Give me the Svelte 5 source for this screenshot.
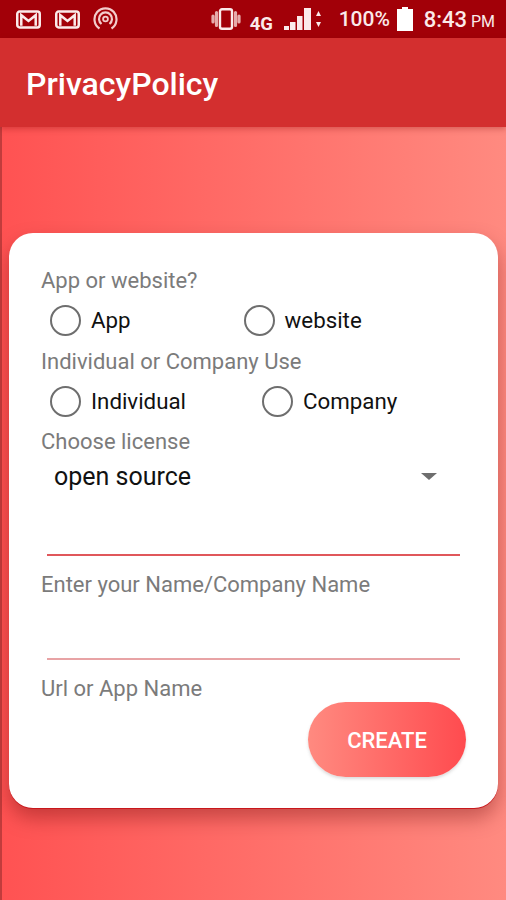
<script>
  let kind = $state('');
  let use = $state('');
</script>

<div class="page">
  <div class="status">
    <div class="notifs">
      <svg class="mail" viewBox="0 0 26 19" fill="none" stroke="#fbeaea" stroke-width="2.6"><rect x="1.3" y="1.3" width="23.4" height="16.4" rx="2.5"/><path d="M5.5 16V5l7.5 6 7.5-6v11"/></svg>
      <svg class="mail" viewBox="0 0 26 19" fill="none" stroke="#fbeaea" stroke-width="2.6"><rect x="1.3" y="1.3" width="23.4" height="16.4" rx="2.5"/><path d="M5.5 16V5l7.5 6 7.5-6v11"/></svg>
      <svg class="cast" viewBox="0 0 25 24" fill="none" stroke="#f3cccc" stroke-width="2.2"><path d="M6.5 21.5a11 11 0 1 1 12 0"/><path d="M8.5 17a6.5 6.5 0 1 1 8 0"/><circle cx="12.5" cy="12" r="2.4" stroke-width="1.8"/></svg>
    </div>
    <div class="sys">
      <svg class="vibrate" viewBox="0 0 30 22"><path d="M5.5 4.5v13M2 8v6M24.5 4.5v13M28 8v6" stroke="#e6abab" stroke-width="3.2" stroke-linecap="round"/><rect x="9" y="1.2" width="12" height="19.6" rx="2" fill="none" stroke="#fbeaea" stroke-width="2.4"/></svg>
      <span class="net">4G</span>
      <svg class="signal" viewBox="0 0 37 22" fill="#fbeaea"><rect x="0" y="18" width="5" height="4"/><rect x="6" y="14" width="5.500" height="8"/><rect x="13" y="8" width="5.500" height="14"/><rect x="20" y="0" width="7" height="22"/><path d="M34.500 3l2.500 5h-5zM34.500 19l-2.500-5h5z"/></svg>
      <span class="pct">100%</span>
      <svg class="battery" viewBox="0 0 16 24" fill="#fff"><path d="M5 0h6v2h5v22H0V2h5z"/></svg>
      <span class="time">8:43<small>PM</small></span>
    </div>
  </div>

  <header class="toolbar">PrivacyPolicy</header>

  <main class="content">
    <form class="card">
      <p class="label">App or website?</p>
      <div class="radios first">
        <label class="radio">
          <input type="radio" bind:group={kind} value="app" />
          App
        </label>
        <label class="radio">
          <input type="radio" bind:group={kind} value="website" />
          website
        </label>
      </div>

      <p class="label">Individual or Company Use</p>
      <div class="radios second">
        <label class="radio">
          <input type="radio" bind:group={use} value="individual" />
          Individual
        </label>
        <label class="radio">
          <input type="radio" bind:group={use} value="company" />
          Company
        </label>
      </div>

      <p class="label">Choose license</p>
      <div class="select">
        <span>open source</span>
        <i class="caret"></i>
      </div>

      <div class="line strong"></div>
      <p class="label">Enter your Name/Company Name</p>
      <div class="line soft"></div>
      <p class="label">Url or App Name</p>

      <button type="button" class="create">CREATE</button>
    </form>
  </main>
</div>

<style>
  :global(body) {
    margin: 0;
  }

  .page {
    width: 506px;
    height: 900px;
    overflow: hidden;
    display: flex;
    flex-direction: column;
    font-family: Roboto, sans-serif;
  }

  .status {
    height: 38px;
    flex: none;
    display: flex;
    justify-content: space-between;
    align-items: center;
    background: #a20008;
    color: #fbeaea;
    padding: 0 11px 0 16px;
  }

  .notifs {
    display: flex;
    align-items: center;
    gap: 14px;
  }

  .mail {
    width: 25px;
    height: 19px;
  }

  .cast {
    width: 25px;
    height: 24px;
    margin-left: -1px;
  }

  .sys {
    display: flex;
    align-items: center;
    font-weight: 500;
  }

  .vibrate {
    width: 30px;
    height: 22px;
    margin-right: 9px;
  }

  .net {
    width: 25px;
    font-size: 18.5px;
    font-weight: 700;
    margin-right: 9px;
    padding-top: 9px;
    line-height: 20px;
  }

  .signal {
    width: 37px;
    height: 22px;
    margin-right: 18px;
  }

  .pct {
    width: 51px;
    font-size: 21px;
    margin-right: 7px;
  }

  .battery {
    width: 16px;
    height: 24px;
    margin-right: 11px;
  }

  .time {
    font-size: 22px;
    white-space: nowrap;
  }

  .time small {
    font-size: 16px;
    font-weight: 400;
    margin-left: 4px;
  }

  .toolbar {
    height: 89px;
    flex: none;
    position: relative;
    box-sizing: border-box;
    padding: 26px 0 0 26px;
    font-size: 32px;
    font-weight: 500;
    line-height: 40px;
    color: #fff;
    background: #d32f2f;
    box-shadow: 0 2px 6px rgba(120, 0, 0, 0.3);
  }

  .content {
    flex: 1;
    padding: 106px 8px 0 9px;
    background: linear-gradient(90deg, #ff5252 0%, #ff8a80 100%);
    box-shadow: inset 2px 0 0 #c23c3c;
  }

  .card {
    height: 575px;
    box-sizing: border-box;
    padding: 34px 38px 0 32px;
    background: #fff;
    border-radius: 24px;
    box-shadow: 0 1px 0 #c9171c, 0 10px 20px rgba(90, 0, 0, 0.35);
  }

  .label {
    margin: 0;
    font-size: 22px;
    line-height: 28px;
    color: #7b7b7b;
  }

  .radios {
    display: flex;
    height: 50px;
    padding-left: 9px;
    margin-bottom: 3px;
  }

  .first {
    gap: 113px;
  }

  .second {
    gap: 76px;
    margin-bottom: 2px;
  }

  .radio {
    display: flex;
    align-items: center;
    font-size: 22.3px;
    color: #111;
  }

  .radio input {
    appearance: none;
    width: 31px;
    height: 31px;
    margin: 0 10px 0 0;
    border: 2.5px solid #6e6e6e;
    border-radius: 50%;
    box-sizing: border-box;
  }

  .select {
    display: flex;
    justify-content: space-between;
    align-items: center;
    height: 40px;
    padding: 0 23px 0 13px;
    font-size: 25px;
    color: #111;
  }

  .caret {
    width: 0;
    height: 0;
    border-left: 8px solid transparent;
    border-right: 8px solid transparent;
    border-top: 7px solid #6e6e6e;
  }

  .line {
    height: 2px;
    margin-left: 6px;
    width: 413px;
  }

  .strong {
    background: #e0575b;
    margin-top: 58px;
    margin-bottom: 15px;
  }

  .soft {
    background: #e8a3a5;
    margin-top: 59px;
    margin-bottom: 15px;
  }

  .create {
    display: block;
    width: 158px;
    height: 75px;
    margin-left: 267px;
    margin-top: -1px;
    padding-top: 2px;
    border: 0;
    border-radius: 38px;
    font-family: inherit;
    font-size: 22px;
    font-weight: 500;
    color: #fff;
    background: linear-gradient(90deg, #ff8a80 0%, #ff4b4f 100%);
    box-shadow: 0 2px 3px rgba(120, 120, 120, 0.25);
  }
</style>
